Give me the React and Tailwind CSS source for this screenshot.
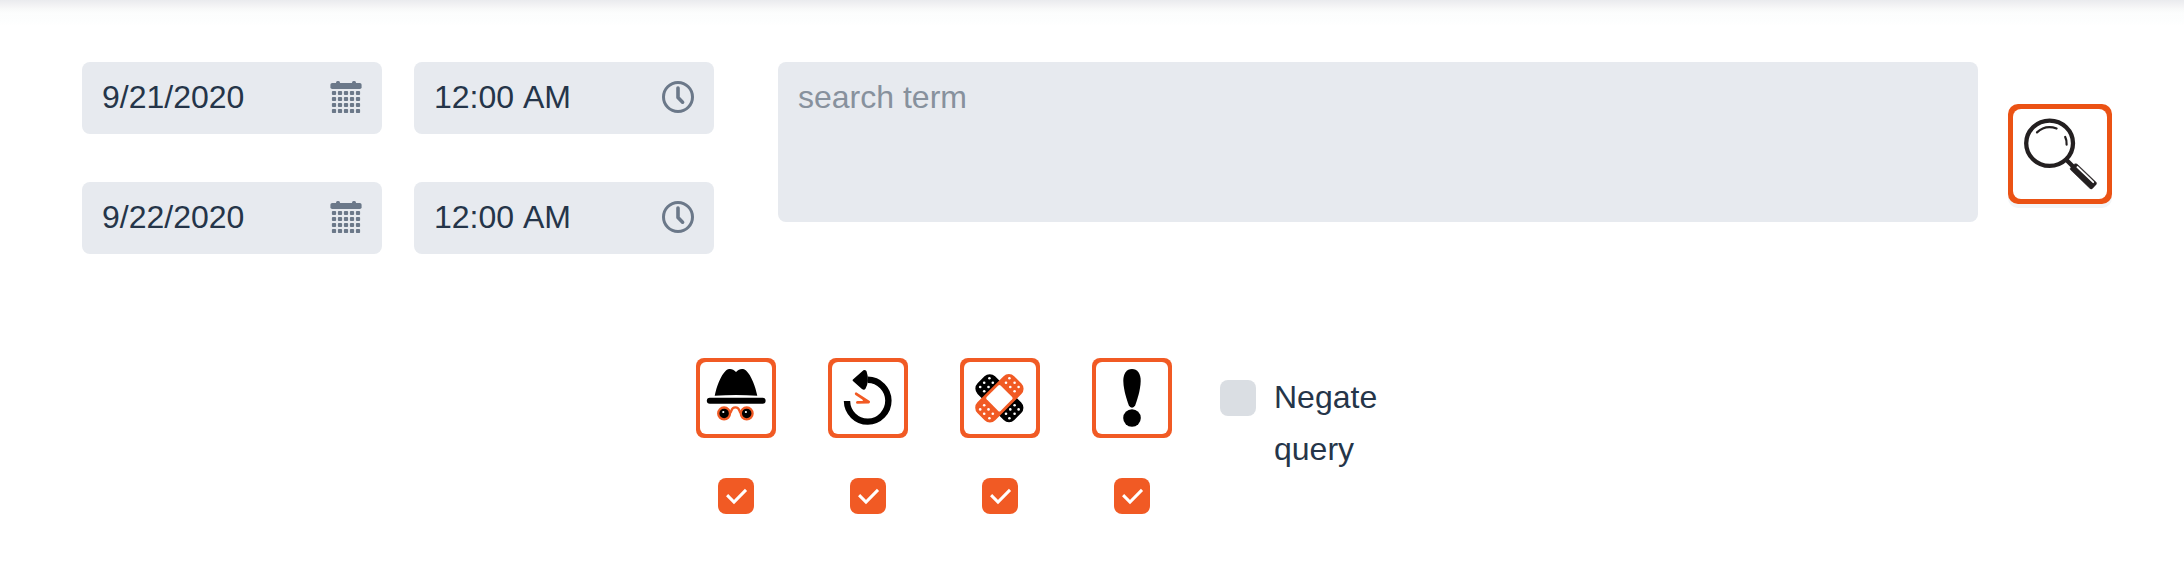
import React from "react";

const SANS = "font-['Liberation_Sans',Arial,sans-serif]";

function CalendarIcon() {
  return (
    <svg width="32" height="32" viewBox="0 0 32 32" fill="#6b7889" className="shrink-0">
      <rect x="6" y="0" width="4" height="5" rx="1.5" />
      <rect x="22" y="0" width="4" height="5" rx="1.5" />
      <rect x="0.4" y="2" width="31.2" height="6" rx="1.8" />
      {[12, 18, 24, 30].map((y) =>
        [4, 10, 16, 22, 28].map((x) => (
          <rect key={`${x}-${y}`} x={x - 2.1} y={y - 2.1} width="4.2" height="4.2" rx="1" />
        ))
      )}
    </svg>
  );
}

function ClockIcon() {
  return (
    <svg width="32" height="32" viewBox="0 0 32 32" fill="none" stroke="#6b7889" className="shrink-0">
      <circle cx="16" cy="16" r="14.5" strokeWidth="3" />
      <path d="M16 7V16.6L20.6 21.2" strokeWidth="3.6" strokeLinecap="round" strokeLinejoin="round" />
    </svg>
  );
}

function Field({ value, icon }) {
  return (
    <div className="flex h-[72px] w-[300px] items-center justify-between rounded-lg bg-[#e7eaef] pr-5 pl-5">
      <span className="-mt-[2px] text-[32px] leading-[52px] text-[#253549] [font-kerning:none]">{value}</span>
      <span className="-mt-[2px]">{icon}</span>
    </div>
  );
}

function Magnifier() {
  return (
    <svg width="104" height="100" viewBox="0 0 104 100" fill="none" stroke="#231f20">
      <ellipse cx="41.6" cy="39.3" rx="23.4" ry="22.6" strokeWidth="4.3" />
      <path d="M29 28.4C34 23.6 41 21.8 48.6 24.5" strokeWidth="2.2" strokeLinecap="round" />
      <path d="M57.2 33Q59 36.6 58.6 40.6" strokeWidth="2.2" strokeLinecap="round" />
      <path d="M57.5 55L66 63.5" strokeWidth="4.4" />
      <path
        d="M69.2 60.2L88 78.2Q89 79.3 88.1 80.4L84.4 84.4Q83.2 85.4 82 84.4L62.6 65.8Q61.8 64.8 62.6 63.8L66.4 60.2Q67.8 59.2 69.2 60.2Z"
        fill="#231f20"
        strokeWidth="0.6"
      />
      <path d="M69.4 63L85.2 78.2" stroke="#fff" strokeWidth="1.8" strokeLinecap="round" />
    </svg>
  );
}

function Incognito() {
  return (
    <svg width="80" height="80" viewBox="0 0 80 80">
      <path d="M18.7 37.8C20.5 29 24.5 17.5 30 12.5C33.5 9.8 37 11 40 14C43 11 46.5 9.8 50 12.5C55.5 17.5 59.5 29 61.3 37.8Q40 36.4 18.7 37.8Z" />
      <rect x="10.8" y="39.8" width="58.8" height="6" rx="3" />
      <path d="M33 55C36.6 55 34 49.3 39.4 49.3C44.8 49.3 42.2 55 45.8 55" fill="none" stroke="#f15a24" strokeWidth="2.3" />
      {[28.1, 50.7].map((x) => (
        <g key={x}>
          <circle cx={x} cy="55.4" r="5.9" stroke="#f15a24" strokeWidth="2.3" />
          <circle cx={x - 0.8} cy="54" r="1.1" fill="#fff" />
        </g>
      ))}
    </svg>
  );
}

function History() {
  return (
    <svg width="80" height="80" viewBox="0 0 80 80" fill="none">
      <path d="M19 43A20.7 20.9 0 1 0 39.7 21.8" stroke="#000" strokeWidth="6.4" />
      <path
        d="M25.6 22.2L35.8 13.2Q37.2 12.6 37.8 14.2Q40.6 22.6 36.6 30.2Q36 31.2 34.6 30.2Z"
        fill="#000"
        stroke="#000"
        strokeWidth="2"
        strokeLinejoin="round"
      />
      <path d="M28.2 35.8L40.6 44L29.4 44.4M35.6 41L36.8 43.6" stroke="#f15a24" strokeWidth="2.8" strokeLinecap="round" strokeLinejoin="round" />
    </svg>
  );
}

const BANDAGE_HOLES = [
  [-10, -20], [-15.2, -15.5], [-6.6, -15.5], [-19.2, -11.2], [-10.9, -11.2], [-15.2, -7],
];

function Bandages() {
  return (
    <svg width="80" height="80" viewBox="0 0 80 80">
      <g transform="translate(39.4 40.2)">
        <rect x="-26" y="-12.4" width="52" height="24.8" rx="7.5" transform="rotate(45)" />
        <rect x="-26" y="-12.6" width="52" height="25.2" rx="7.5" transform="rotate(-45)" fill="#f15a24" />
        <rect x="-9.8" y="-9.8" width="19.6" height="19.6" rx="1.6" transform="rotate(45)" fill="#fff" />
        {BANDAGE_HOLES.map(([x, y]) => (
          <g key={`${x}:${y}`} fill="#fff">
            <circle cx={x} cy={y} r="1.3" />
            <circle cx={-x} cy={y} r="1.3" />
            <circle cx={x} cy={-y} r="1.3" />
            <circle cx={-x} cy={-y} r="1.3" />
          </g>
        ))}
      </g>
    </svg>
  );
}

function Exclamation() {
  return (
    <svg width="80" height="80" viewBox="0 0 80 80">
      <path d="M40 11C45.4 11 48.8 15.5 48.7 23C48.5 32 45 42.5 43.2 47.3Q42.2 49.7 40 49.7Q37.8 49.7 36.8 47.3C35 42.5 31.5 32 31.3 23C31.2 15.5 34.6 11 40 11Z" />
      <circle cx="40" cy="60" r="8.8" />
    </svg>
  );
}

function Tile({ children }) {
  return (
    <div className="flex w-20 flex-col items-center gap-10">
      <div className="size-20 rounded-lg bg-[#f15a24] p-1">
        <div className="size-[72px] rounded-md bg-white">
          <div className="-mt-1 -ml-1 inline-block size-20">{children}</div>
        </div>
      </div>
      <div className="size-9 rounded-lg bg-[#f15a24]">
        <svg width="36" height="36" viewBox="0 0 36 36" fill="none" stroke="#fff" strokeWidth="3">
          <path d="M9.1 17.1L16 24L28 11.9" />
        </svg>
      </div>
    </div>
  );
}

export default function App() {
  return (
    <div className={`h-[572px] w-[2184px] overflow-hidden bg-white ${SANS}`}>
      <div className="h-[62px] bg-[linear-gradient(to_bottom,#eaebee_0px,#f2f2f4_5px,#f8f9f9_9px,#fcfdfd_13px,#fdfefe_22px,#ffffff_26px)]" />
      <div className="flex pl-[82px]">
        <div className="grid grid-cols-[300px_300px] gap-x-8 gap-y-12">
          <Field value="9/21/2020" icon={<CalendarIcon />} />
          <Field value="12:00 AM" icon={<ClockIcon />} />
          <Field value="9/22/2020" icon={<CalendarIcon />} />
          <Field value="12:00 AM" icon={<ClockIcon />} />
        </div>
        <div className="ml-16 h-40 w-[1200px] rounded-lg bg-[#e7eaef] px-5 pt-[9px] text-[32px] leading-[52px] text-[#87919d]">
          search term
        </div>
        <div className="mt-[42px] ml-[30px] h-[100px] w-[104px] rounded-[10px] bg-[#eb5214] p-[5px] shadow-[0_4px_0_#f3f5f7]">
          <div className="h-[90px] w-[94px] rounded-lg bg-white">
            <div className="-mt-[5px] -ml-[5px] inline-block h-[100px] w-[104px]">
              <Magnifier />
            </div>
          </div>
        </div>
      </div>
      <div className="mt-[104px] flex items-start pl-[696px]">
        <div className="flex gap-[52px]">
          <Tile><Incognito /></Tile>
          <Tile><History /></Tile>
          <Tile><Bandages /></Tile>
          <Tile><Exclamation /></Tile>
        </div>
        <div className="ml-12 flex">
          <div className="mt-[22px] size-9 rounded-lg bg-[#dadee3]" />
          <div className="mt-[13px] ml-[18px] w-[120px] text-[32px] leading-[52px] text-[#253549]">
            Negate query
          </div>
        </div>
      </div>
    </div>
  );
}
